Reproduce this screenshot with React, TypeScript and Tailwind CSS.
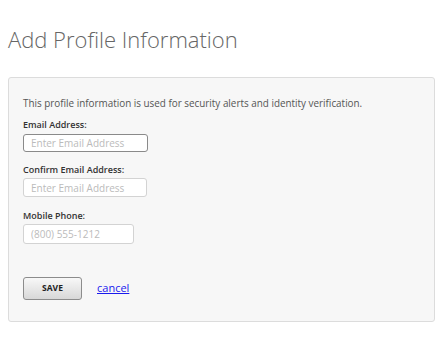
export default function App() {
  return (
    <div className="w-[443px] h-[347px] bg-white font-['Open_Sans',sans-serif] text-[#555] overflow-hidden">
      <h1 className="pl-2 pt-[23px] text-[22px] leading-[32px] font-light text-[#666]">
        Add Profile Information
      </h1>

      <div className="mx-2 mt-[22px] h-[245px] rounded-[3px] border border-[#dcdcdc] bg-[#f7f7f7] px-[14px] pt-[18px]">
        <p className="text-[9.9px] leading-[14px] text-[#555]">
          This profile information is used for security alerts and identity verification.
        </p>

        <div className="mt-[8px] flex flex-col">
          <label className="text-[9px] leading-[13px] font-semibold text-[#333]">Email Address:</label>
          <input
            placeholder="Enter Email Address"
            className="mt-[3px] h-[18px] w-[125px] rounded-[3px] border border-[#8a8a8a] bg-white px-[7px] text-[10px] placeholder:text-[#bbb] outline-none"
          />

          <label className="mt-[11px] text-[9px] leading-[13px] font-semibold text-[#333]">Confirm Email Address:</label>
          <input
            placeholder="Enter Email Address"
            className="mt-[2px] h-[19px] w-[124px] rounded-[3px] border border-[#d3d3d3] bg-white px-[7px] text-[10px] placeholder:text-[#bbb] outline-none"
          />

          <label className="mt-[12px] text-[9px] leading-[13px] font-semibold text-[#333]">Mobile Phone:</label>
          <input
            placeholder="(800) 555-1212"
            className="mt-[2px] h-[20px] w-[111px] rounded-[3px] border border-[#d3d3d3] bg-white px-[7px] text-[10px] placeholder:text-[#bbb] outline-none"
          />
        </div>

        <div className="mt-[33px] flex items-center gap-[15px]">
          <button className="h-[23px] w-[59px] rounded-[3px] border border-[#8c8c8c] bg-gradient-to-b from-[#f8f8f8] to-[#d8d8d8] text-[8.5px] font-bold text-[#222]">
            SAVE
          </button>
          <a href="#" className="text-[11px] text-[#1a1aee] underline">
            cancel
          </a>
        </div>
      </div>
    </div>
  );
}
